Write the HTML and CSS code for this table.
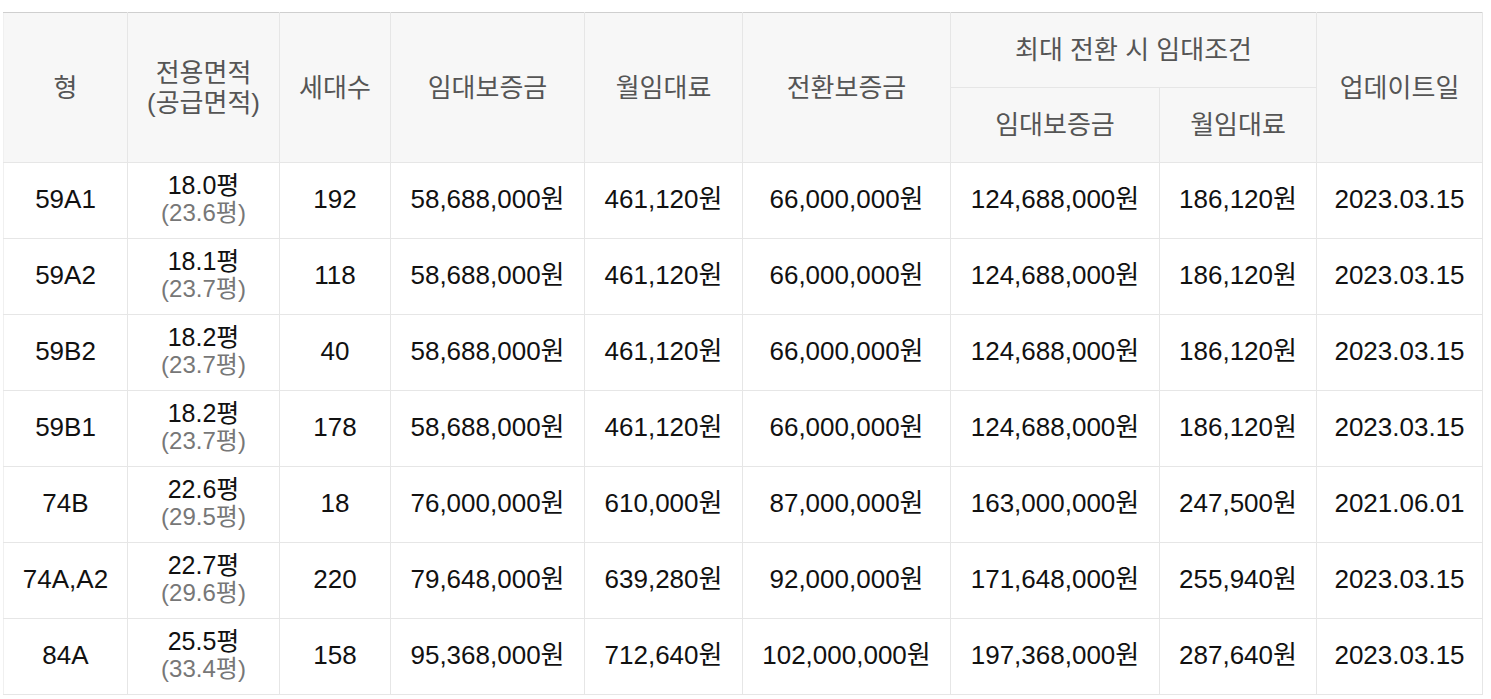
FILE: index.html
```html
<!DOCTYPE html>
<html lang="ko">
<head>
<meta charset="utf-8">
<link rel="stylesheet" href="styles.css">
</head>
<body>
<div class="wrap">
<table class="rent">
  <colgroup>
    <col style="width:124px"><col style="width:152px"><col style="width:111px"><col style="width:194px"><col style="width:158px"><col style="width:208px"><col style="width:209px"><col style="width:157px"><col style="width:166px">
  </colgroup>
  <thead>
    <tr>
      <th rowspan="2">형</th>
      <th rowspan="2">전용면적<br>(공급면적)</th>
      <th rowspan="2">세대수</th>
      <th rowspan="2">임대보증금</th>
      <th rowspan="2">월임대료</th>
      <th rowspan="2">전환보증금</th>
      <th colspan="2">최대 전환 시 임대조건</th>
      <th rowspan="2">업데이트일</th>
    </tr>
    <tr>
      <th>임대보증금</th>
      <th>월임대료</th>
    </tr>
  </thead>
  <tbody>
    <tr><td>59A1</td><td><div class="area">18.0평</div><div class="sup">(23.6평)</div></td><td>192</td><td>58,688,000원</td><td>461,120원</td><td>66,000,000원</td><td>124,688,000원</td><td>186,120원</td><td>2023.03.15</td></tr>
    <tr><td>59A2</td><td><div class="area">18.1평</div><div class="sup">(23.7평)</div></td><td>118</td><td>58,688,000원</td><td>461,120원</td><td>66,000,000원</td><td>124,688,000원</td><td>186,120원</td><td>2023.03.15</td></tr>
    <tr><td>59B2</td><td><div class="area">18.2평</div><div class="sup">(23.7평)</div></td><td>40</td><td>58,688,000원</td><td>461,120원</td><td>66,000,000원</td><td>124,688,000원</td><td>186,120원</td><td>2023.03.15</td></tr>
    <tr><td>59B1</td><td><div class="area">18.2평</div><div class="sup">(23.7평)</div></td><td>178</td><td>58,688,000원</td><td>461,120원</td><td>66,000,000원</td><td>124,688,000원</td><td>186,120원</td><td>2023.03.15</td></tr>
    <tr><td>74B</td><td><div class="area">22.6평</div><div class="sup">(29.5평)</div></td><td>18</td><td>76,000,000원</td><td>610,000원</td><td>87,000,000원</td><td>163,000,000원</td><td>247,500원</td><td>2021.06.01</td></tr>
    <tr><td>74A,A2</td><td><div class="area">22.7평</div><div class="sup">(29.6평)</div></td><td>220</td><td>79,648,000원</td><td>639,280원</td><td>92,000,000원</td><td>171,648,000원</td><td>255,940원</td><td>2023.03.15</td></tr>
    <tr><td>84A</td><td><div class="area">25.5평</div><div class="sup">(33.4평)</div></td><td>158</td><td>95,368,000원</td><td>712,640원</td><td>102,000,000원</td><td>197,368,000원</td><td>287,640원</td><td>2023.03.15</td></tr>
  </tbody>
</table>
</div>
</body>
</html>
```

FILE: styles.css
```css
html, body {
  margin: 0;
  padding: 0;
  background: #fff;
}
body {
  font-family: "Liberation Sans", "Noto Sans CJK KR", sans-serif;
}
.wrap {
  padding: 12px 0 0 3px;
}
.rent {
  border-collapse: collapse;
  table-layout: fixed;
  width: 1479px;
  border-top: 1px solid #cfcfcf;
}
.rent th, .rent td {
  border: 1px solid #e6e6e6;
  text-align: center;
  vertical-align: middle;
  padding: 0;
}
.rent th:first-child, .rent td:first-child {
  border-left: 1px solid #f0f0f0;
}
.rent thead th {
  background: #f7f7f7;
  color: #555;
  font-weight: normal;
  font-size: 26px;
  line-height: 30px;
  height: 74px;
}
.rent thead tr:first-child th {
  border-top: 1px solid #cfcfcf;
}
.rent tbody td {
  color: #111;
  font-size: 26px;
  line-height: 28px;
  height: 72px;
  padding-bottom: 3px;
}
.rent tbody td .area {
  color: #111;
  font-size: 25px;
  line-height: 27px;
}
.rent tbody td .sup {
  color: #777;
  font-size: 24px;
  line-height: 27px;
}
```
